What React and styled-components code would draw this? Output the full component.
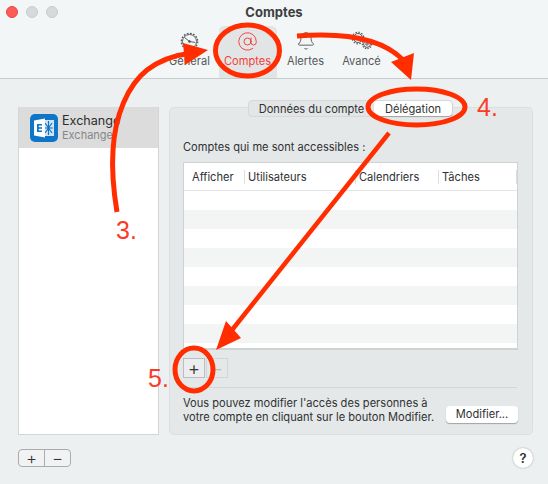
import styled, { createGlobalStyle } from "styled-components";
import { AtSign, Bell } from "lucide-react";

const GlobalStyle = createGlobalStyle`
  * { box-sizing: border-box; }
  html, body { margin: 0; padding: 0; }
  body {
    width: 548px;
    height: 484px;
    overflow: hidden;
    background: #edf0f1;
    font-family: "Inter", "Liberation Sans", sans-serif;
    color: #2f3133;
  }
`;

const Window = styled.div`
  position: relative;
  width: 548px;
  height: 484px;
  display: flex;
  flex-direction: column;
`;

const Header = styled.header`
  height: 79px;
  background: #f2f6f7;
  border-bottom: 1px solid #c9cccd;
  display: flex;
  flex-direction: column;
`;

const TitleBar = styled.div`
  position: relative;
  height: 26px;
  display: flex;
  align-items: center;
  justify-content: center;
  padding-bottom: 3px;
`;

const Lights = styled.div`
  position: absolute;
  left: 6px;
  top: 6px;
  display: flex;
  gap: 8px;
`;

const Light = styled.span`
  width: 12px;
  height: 12px;
  border-radius: 50%;
  background: ${(p) => p.$color};
  border: 1px solid ${(p) => p.$edge};
`;

const Title = styled.div`
  font-size: 13px;
  font-weight: 700;
  color: #3d3f41;
`;

const Toolbar = styled.nav`
  display: flex;
  justify-content: center;
  padding-left: 1px;
  flex: 1;
`;

const ToolItem = styled.div`
  width: ${(p) => p.$w}px;
  display: flex;
  flex-direction: column;
  align-items: center;
  padding-top: 2px;
  font-size: 11.1px;
  border-radius: 5px 5px 0 0;
  color: ${(p) => (p.$active ? "#f4403a" : "#55585a")};
  background: ${(p) => (p.$active ? "#e2e5e6" : "transparent")};
`;

const IconSlot = styled.div`
  height: 26px;
  display: flex;
  align-items: center;
  justify-content: center;
`;

const Main = styled.main`
  display: flex;
  gap: 10px;
  padding: 28px 15px 0 18px;
  height: 356px;
`;

const Sidebar = styled.aside`
  flex: none;
  width: 141px;
  background: #fff;
  border: 1px solid #d3d6d7;
  border-top: none;
`;

const AccountRow = styled.div`
  height: 41px;
  background: #dcdcdc;
  display: flex;
  align-items: center;
  gap: 4px;
  padding-left: 11px;
`;

const AccountText = styled.div`
  display: flex;
  flex-direction: column;
  gap: 1px;
`;

const AccountName = styled.div`
  font-size: 12.6px;
  line-height: 14px;
  color: #2b2c2e;
`;

const AccountType = styled.div`
  font-size: 11px;
  line-height: 13px;
  color: #85888a;
`;

const Panel = styled.section`
  flex: none;
  width: 364px;
  background: #e5e8e9;
  border: 1px solid #dcdfe0;
  border-radius: 5px;
  padding: 0 14px 0 13px;
  display: flex;
  flex-direction: column;
`;

const Tabs = styled.div`
  display: flex;
  margin: -8px 0 0 65px;
  height: 17px;
  width: 205px;
  background: #e3e5e6;
  border: 1px solid #d6d8d9;
  border-radius: 4px;
  flex: none;
`;

const Tab = styled.div`
  font-size: 11.1px;
  flex: ${(p) => (p.$active ? "0 0 78px" : "1")};
  display: flex;
  align-items: center;
  justify-content: center;
  border-radius: 4px;
  background: ${(p) => (p.$active ? "#fff" : "transparent")};
  box-shadow: ${(p) => (p.$active ? "0 1px 1px rgba(0,0,0,.25)" : "none")};
`;

const Label = styled.div`
  margin-top: 23px;
  height: 14px;
  font-size: 11.1px;
  line-height: 14px;
`;

const Table = styled.div`
  margin-top: 8px;
  height: 188px;
  width: 335px;
  flex: none;
  overflow: hidden;
  background: #fff;
  border: 1px solid #cfd2d3;
  border-bottom-width: 2px;
  display: flex;
  flex-direction: column;
`;

const HeadRow = styled.div`
  height: 28px;
  flex: none;
  display: grid;
  grid-template-columns: 61px 111px 83px 78px;
  align-items: center;
  border-bottom: 1px solid #e3e5e6;
`;

const HeadCell = styled.div`
  font-size: 11.1px;
  height: 14px;
  line-height: 14px;
  padding-left: ${(p) => p.$pad}px;
  border-right: 1px solid #dcdfe0;
`;

const Row = styled.div`
  height: 19px;
  flex: none;
  background: ${(p) => (p.$alt ? "#f3f5f5" : "#fff")};
`;

const SquareBtns = styled.div`
  display: flex;
  gap: 1px;
  margin-top: 8px;
  flex: none;
`;

const SquareBtn = styled.div`
  width: 22px;
  height: 20px;
  border: 1px solid ${(p) => (p.$off ? "#d3d6d7" : "#bbbebf")};
  display: flex;
  align-items: center;
  justify-content: center;
  font-size: 19px;
  font-weight: 300;
  color: ${(p) => (p.$off ? "#b9bcbd" : "#333")};
  background: ${(p) => (p.$off ? "transparent" : "#ebedee")};
`;

const Divider = styled.div`
  height: 1px;
  width: 334px;
  margin-top: 9px;
  background: #d3d6d7;
  flex: none;
`;

const FootRow = styled.div`
  margin-top: 8px;
  display: flex;
  justify-content: space-between;
  width: 335px;
`;

const FootText = styled.div`
  font-size: 11.1px;
  line-height: 14px;
  white-space: nowrap;
`;

const PushBtn = styled.div`
  align-self: flex-end;
  width: 72px;
  height: 17px;
  background: #fff;
  border-radius: 4px;
  box-shadow: 0 1px 1px rgba(0, 0, 0, 0.3);
  font-size: 11.1px;
  line-height: 16px;
  text-align: center;
  margin-bottom: 1px;
`;

const Bottom = styled.footer`
  display: flex;
  justify-content: space-between;
  align-items: center;
  padding: 13px 15px 0 18px;
`;

const Stepper = styled.div`
  width: 53px;
  height: 18px;
  border: 1px solid #a9acad;
  border-radius: 4px;
  display: flex;
  background: #f0f2f3;
`;

const StepBtn = styled.div`
  flex: 1;
  display: flex;
  align-items: center;
  justify-content: center;
  font-size: 17px;
  font-weight: 300;
  line-height: 1;
  color: #333;
  & + & {
    border-left: 1px solid #a9acad;
  }
`;

const Help = styled.div`
  width: 20px;
  height: 20px;
  border-radius: 50%;
  background: #fff;
  box-shadow: 0 0 2px rgba(0, 0, 0, 0.35);
  display: flex;
  align-items: center;
  justify-content: center;
  font-size: 13px;
  font-weight: 600;
`;

const Overlay = styled.svg`
  position: absolute;
  inset: 0;
  pointer-events: none;
`;

const Step = styled.div`
  position: absolute;
  left: ${(p) => p.$x}px;
  top: ${(p) => p.$y}px;
  font-family: "Liberation Sans", sans-serif;
  font-size: 25px;
  line-height: 28px;
  color: #fb3b26;
`;

const GeneralIcon = () => (
  <svg width="19" height="19" viewBox="0 0 20 20" fill="none" stroke="#55585a" strokeWidth="1">
    <circle cx="10" cy="10" r="7.4" />
    <circle cx="10" cy="10" r="8.6" strokeDasharray="1.8 1.6" strokeWidth="1.4" />
    <path d="M4.5 5.5l5.5 4.5 6 1" />
    <circle cx="10" cy="10" r="1" fill="#55585a" />
  </svg>
);

const AdvancedIcon = () => (
  <svg width="24" height="20" viewBox="0 0 24 20" fill="none" stroke="#55585a" strokeWidth="1">
    <circle cx="8" cy="7" r="4.5" />
    <circle cx="8" cy="7" r="5.8" strokeDasharray="1.5 1.5" strokeWidth="1.2" />
    <circle cx="8" cy="7" r="1.5" />
    <circle cx="17" cy="13" r="3.4" />
    <circle cx="17" cy="13" r="4.6" strokeDasharray="1.4 1.2" strokeWidth="1.2" />
    <circle cx="17" cy="13" r="1.2" />
  </svg>
);

const ExchangeIcon = () => (
  <svg width="28" height="28" viewBox="0 0 28 28">
    <rect width="28" height="28" rx="5" fill="#0f75c6" />
    <rect x="13" y="6" width="11" height="16" fill="#cfe4f5" />
    <path d="M15 9l7 10M22 9l-7 10M18.5 7v14M14 14h9" stroke="#0f75c6" strokeWidth="1.2" />
    <path d="M4 6.5l11-2v19l-11-2z" fill="#fff" />
    <path d="M7 10h5v1.6H8.8v1.7H12v1.5H8.8v1.7H12V18H7z" fill="#0f75c6" />
  </svg>
);

const RED = "#ff2d00";
const columns = [
  { name: "Afficher", pad: 8 },
  { name: "Utilisateurs", pad: 3 },
  { name: "Calendriers", pad: 3 },
  { name: "Tâches", pad: 3 },
];
const rows = [false, true, false, true, false, true, false, true, false];

export default function App() {
  return (
    <Window>
      <GlobalStyle />
      <Header>
        <TitleBar>
          <Lights>
            <Light $color="#fc5b57" $edge="#e5483f" />
            <Light $color="#d6dadb" $edge="#c8cccd" />
            <Light $color="#d6dadb" $edge="#c8cccd" />
          </Lights>
          <Title>Comptes</Title>
        </TitleBar>
        <Toolbar>
          <ToolItem $w={58}>
            <IconSlot>
              <GeneralIcon />
            </IconSlot>
            Général
          </ToolItem>
          <ToolItem $w={58} $active>
            <IconSlot>
              <AtSign size={21} strokeWidth={1.1} color="#f4403a" />
            </IconSlot>
            Comptes
          </ToolItem>
          <ToolItem $w={58}>
            <IconSlot>
              <Bell size={20} strokeWidth={1.1} color="#55585a" />
            </IconSlot>
            Alertes
          </ToolItem>
          <ToolItem $w={54}>
            <IconSlot>
              <AdvancedIcon />
            </IconSlot>
            Avancé
          </ToolItem>
        </Toolbar>
      </Header>

      <Main>
        <Sidebar>
          <AccountRow>
            <ExchangeIcon />
            <AccountText>
              <AccountName>Exchange</AccountName>
              <AccountType>Exchange</AccountType>
            </AccountText>
          </AccountRow>
        </Sidebar>
        <Panel>
          <Tabs>
            <Tab>Données du compte</Tab>
            <Tab $active>Délégation</Tab>
          </Tabs>
          <Label>Comptes qui me sont accessibles :</Label>
          <Table>
            <HeadRow>
              {columns.map((col) => (
                <HeadCell key={col.name} $pad={col.pad}>
                  {col.name}
                </HeadCell>
              ))}
            </HeadRow>
            {rows.map((alt, index) => (
              <Row key={index} $alt={alt} />
            ))}
          </Table>
          <SquareBtns>
            <SquareBtn>+</SquareBtn>
            <SquareBtn $off>−</SquareBtn>
          </SquareBtns>
          <Divider />
          <FootRow>
            <FootText>
              Vous pouvez modifier l'accès des personnes à
              <br />
              votre compte en cliquant sur le bouton Modifier.
            </FootText>
            <PushBtn>Modifier...</PushBtn>
          </FootRow>
        </Panel>
      </Main>

      <Bottom>
        <Stepper>
          <StepBtn>+</StepBtn>
          <StepBtn>−</StepBtn>
        </Stepper>
        <Help>?</Help>
      </Bottom>

      <Overlay width="548" height="484" viewBox="0 0 548 484" fill="none">
        <ellipse cx="247.5" cy="50.5" rx="32" ry="25.5" stroke={RED} strokeWidth="5" />
        <ellipse cx="416.5" cy="107" rx="48.5" ry="18" stroke={RED} strokeWidth="5" />
        <ellipse cx="194" cy="369.5" rx="19" ry="21.5" stroke={RED} strokeWidth="5" />
        <path d="M117 212C113 188 112 165 113 150C115 115 128 85 147 70C160 60 175 55 192 53" stroke={RED} strokeWidth="5" />
        <path d="M183 43L208 50L185 65Z" fill={RED} />
        <path d="M297 36C335 33 380 36 403 60" stroke={RED} strokeWidth="5" />
        <path d="M414 53L391 62L411 80Z" fill={RED} />
        <path d="M389 133L228 335" stroke={RED} strokeWidth="4.5" />
        <path d="M216 350L241 338L226 321Z" fill={RED} />
      </Overlay>
      <Step $x={116} $y={216}>3.</Step>
      <Step $x={477} $y={93}>4.</Step>
      <Step $x={148} $y={364}>5.</Step>
    </Window>
  );
}
